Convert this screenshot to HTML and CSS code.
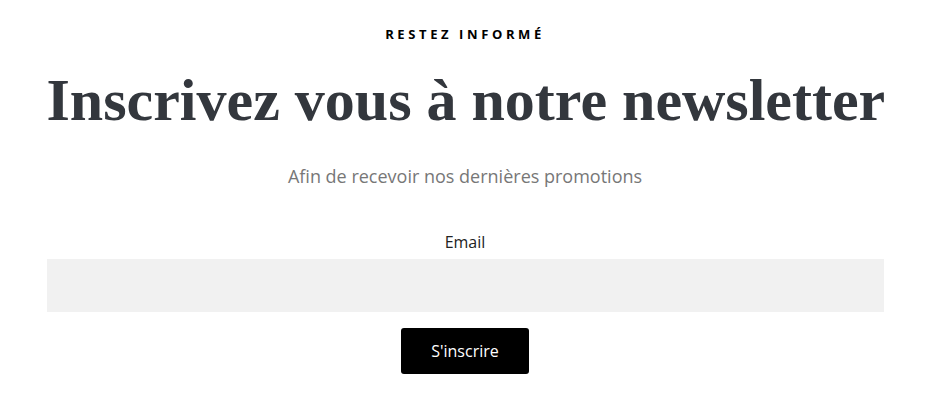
FILE: index.html
```html
<!DOCTYPE html>
<html lang="fr">

<head>
    <meta charset="UTF-8">
    <meta name="viewport" content="width=device-width, initial-scale=1.0">
    <title>Newsletter</title>
    <link rel="stylesheet" href="styles.css">
</head>

<body>

    <section class="newsletter">
        <p class="eyebrow">Restez informé</p>
        <h1 class="title">Inscrivez vous à notre newsletter</h1>
        <p class="subtitle">Afin de recevoir nos dernières promotions</p>

        <form class="signup-form" onsubmit="return false;">
            <label for="email" class="field-label">Email</label>
            <input type="email" id="email" class="field-input">
            <button type="submit" class="submit-btn">S'inscrire</button>
        </form>
    </section>

</body>

</html>
```

FILE: styles.css
```css
/* Global Styles */
body {
    font-family: 'Open Sans', 'Liberation Sans', sans-serif;
    background-color: #fff;
    margin: 0;
    padding: 0;
}

/* Newsletter block */
.newsletter {
    width: 90%;
    margin: 0 auto;
    padding-top: 25px;
    text-align: center;
}

.eyebrow {
    margin: 0;
    font-size: 13px;
    font-weight: 700;
    letter-spacing: 3.6px;
    text-transform: uppercase;
    color: #000;
    line-height: 18px;
}

.title {
    margin: 22px 0 0;
    font-family: 'Liberation Serif', serif;
    font-weight: 700;
    font-size: 60px;
    line-height: 70px;
    color: #33373d;
    white-space: nowrap;
}

.subtitle {
    margin: 29px 0 0;
    font-size: 18px;
    line-height: 24px;
    color: #777;
}

/* Form */
.signup-form {
    display: flex;
    flex-direction: column;
    align-items: center;
    margin-top: 44px;
}

.field-label {
    font-size: 16px;
    line-height: 20px;
    color: #222;
    margin-bottom: 7px;
}

.field-input {
    width: 100%;
    height: 53px;
    box-sizing: border-box;
    border: none;
    background-color: #f1f1f1;
    padding: 0 15px;
    font-size: 16px;
    outline: none;
}

.submit-btn {
    margin-top: 16px;
    width: 128px;
    height: 46px;
    background-color: #000;
    color: #fff;
    border: none;
    border-radius: 3px;
    font-family: inherit;
    font-size: 16px;
    cursor: pointer;
}
```
